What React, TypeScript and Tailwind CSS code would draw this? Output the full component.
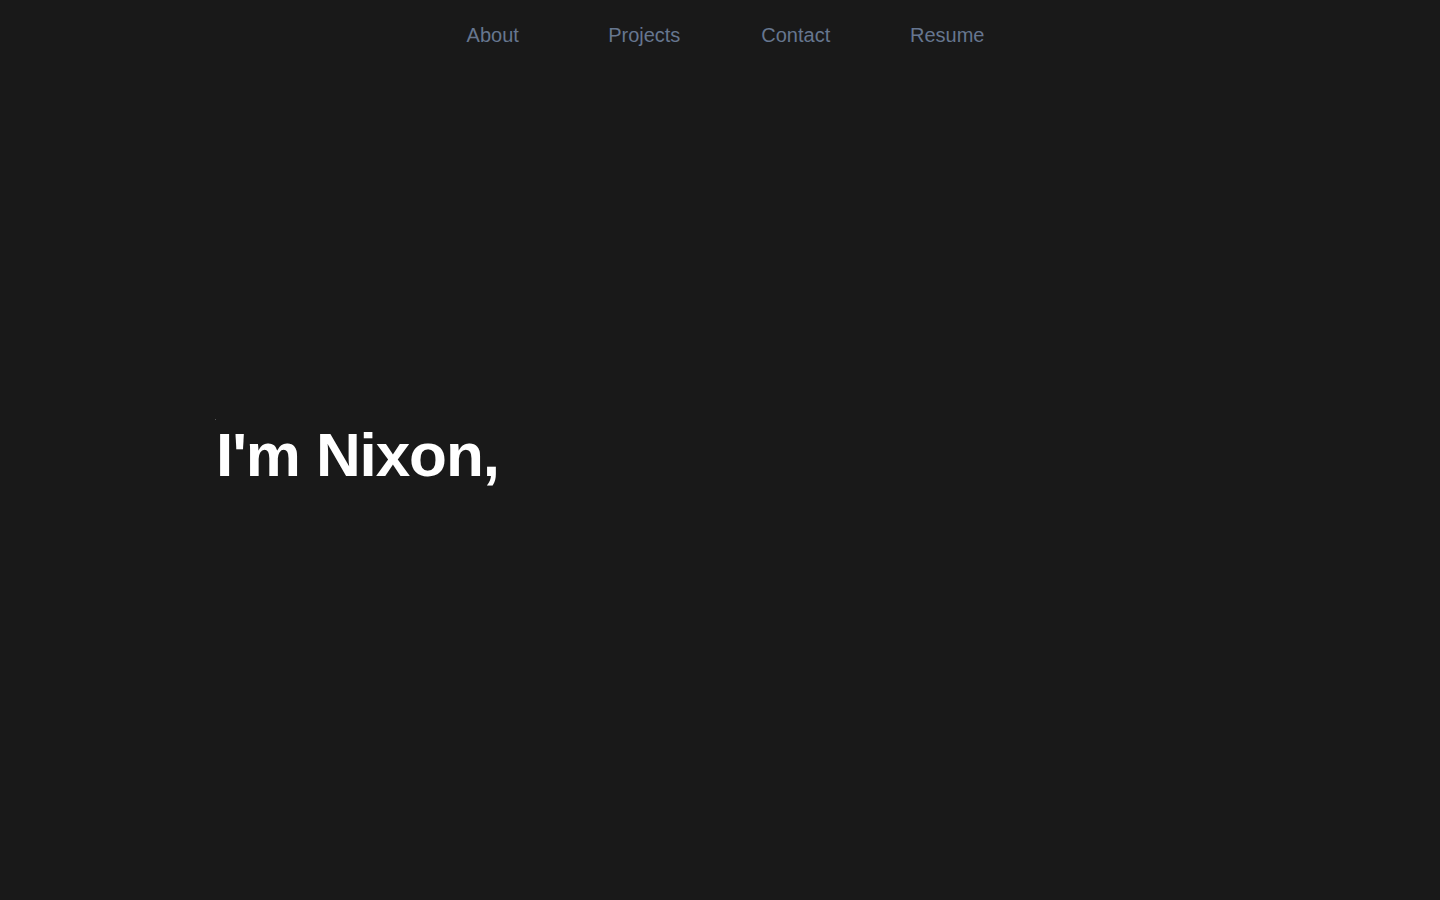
export default function App() {
  return (
    <main className="min-h-screen bg-[#191919] font-['Liberation_Sans',Arial,sans-serif]">
      {/* Nav */}
      <nav className="flex justify-center pt-6">
        {['About', 'Projects', 'Contact', 'Resume'].map((item) => (
          <a
            key={item}
            href="#"
            className="w-[151.5px] text-center text-[20px] leading-[23px] text-[#66768f] hover:text-slate-300"
          >
            {item}
          </a>
        ))}
      </nav>

      {/* Hero */}
      <section className="flex h-[790px] items-center px-[216px]">
        <h1 className="relative pt-[26px] text-[62px] font-bold leading-none tracking-[-1.1px] text-white">
          <span className="absolute -left-[1px] top-[21px] h-px w-px bg-[#555]" />
          I'm Nixon,
        </h1>
      </section>
    </main>
  );
}
